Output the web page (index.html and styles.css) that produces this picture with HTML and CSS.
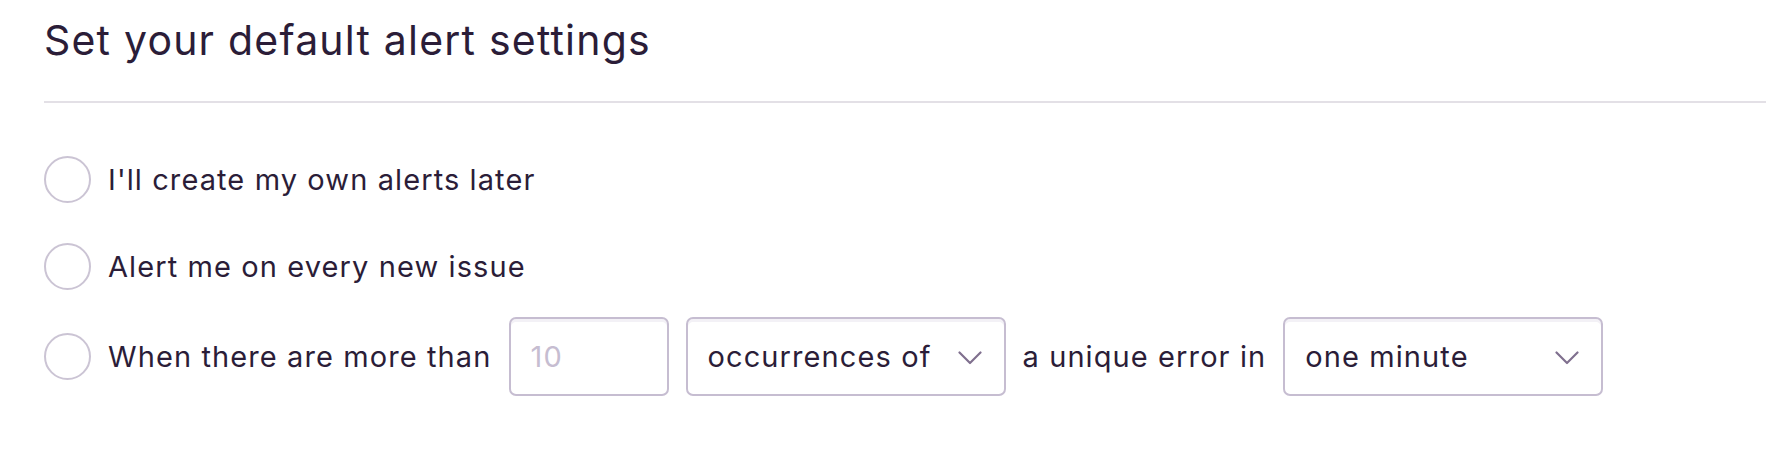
FILE: index.html
```html
<!DOCTYPE html>
<html>
<head>
<meta charset="utf-8">
<link rel="stylesheet" href="styles.css">
</head>
<body>
<div class="panel">
  <h1 class="title">Set your default alert settings</h1>
  <div class="divider"></div>
  <div class="options">
    <label class="option opt-1">
      <span class="radio"></span>
      <span class="label">I'll create my own alerts later</span>
    </label>
    <label class="option opt-2">
      <span class="radio"></span>
      <span class="label">Alert me on every new issue</span>
    </label>
    <div class="option opt-3">
      <span class="radio"></span>
      <span class="label">When there are more than</span>
      <div class="field input-field"><span class="placeholder">10</span></div>
      <div class="field select-field">
        <span class="value">occurrences of</span>
        <svg class="chevron" viewBox="0 0 24 14" width="24" height="14"><path d="M1.5 1.5 L12 12 L22.5 1.5" fill="none" stroke="#80708f" stroke-width="2.2" stroke-linecap="round" stroke-linejoin="round"/></svg>
      </div>
      <span class="label">a unique error in</span>
      <div class="field select-field">
        <span class="value">one minute</span>
        <svg class="chevron" viewBox="0 0 24 14" width="24" height="14"><path d="M1.5 1.5 L12 12 L22.5 1.5" fill="none" stroke="#80708f" stroke-width="2.2" stroke-linecap="round" stroke-linejoin="round"/></svg>
      </div>
    </div>
  </div>
</div>
</body>
</html>
```
FILE: styles.css
```css
html, body {
  margin: 0;
  padding: 0;
  background: #ffffff;
}
body {
  font-family: Inter, "Noto Sans", sans-serif;
  color: #2b1d38;
}
.panel {
  padding: 15px 0 0 44px;
}
.title {
  margin: 0;
  font-size: 41px;
  line-height: 50px;
  letter-spacing: 1.2px;
  font-weight: 400;
  color: #2b1d38;
}
.divider {
  margin-top: 36px;
  border-top: 2px solid #e3e0e6;
}
.options {
  display: flex;
  flex-direction: column;
  padding-top: 53px;
}
.option {
  display: flex;
  align-items: center;
  gap: 17px;
}
.opt-2 {
  margin-top: 40px;
}
.opt-3 {
  margin-top: 27px;
}
.radio {
  box-sizing: border-box;
  width: 47px;
  height: 47px;
  border-radius: 50%;
  border: 2px solid #cbc4d4;
  background: #fff;
  flex: none;
}
.label {
  font-size: 29px;
  line-height: 36px;
  letter-spacing: 1.1px;
}
.field {
  box-sizing: border-box;
  height: 79px;
  width: 160px;
  border: 2px solid #c6bdd1;
  border-radius: 7px;
  box-shadow: inset 0 3px 0 #f3f1f6;
  display: flex;
  align-items: center;
  font-size: 29px;
  letter-spacing: 1.1px;
  flex: none;
}
.input-field {
  padding-left: 20px;
}
.placeholder {
  color: #c6bdd1;
}
.select-field {
  width: 320px;
  padding: 0 22px 0 20px;
  justify-content: space-between;
}
.chevron {
  display: block;
  margin-top: 2px;
}
```
